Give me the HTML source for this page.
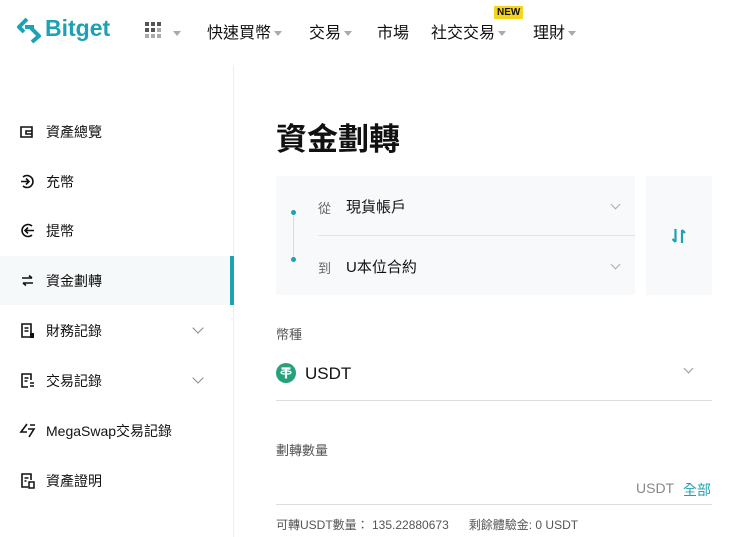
<!DOCTYPE html><html><head><meta charset="utf-8"><style>
*{margin:0;padding:0;box-sizing:border-box}
body{width:740px;height:537px;overflow:hidden;background:#fff;font-family:"Liberation Sans","Noto Sans CJK TC",sans-serif;color:#111;position:relative}
.a{position:absolute;white-space:nowrap}
.nav{font-size:16px;top:19px}
.tri{display:inline-block;width:0;height:0;border-left:4px solid transparent;border-right:4px solid transparent;border-top:5px solid #aaa;vertical-align:middle;margin-left:3px}
.si{font-size:14px;left:46px}
.ic{left:19px;width:17px;height:17px}
.chev{width:8px;height:8px;border-right:1.3px solid #888;border-bottom:1.3px solid #888;transform:rotate(45deg)}
</style></head><body>
<svg class="a" style="left:16px;top:16px" width="26" height="28" viewBox="0 0 26 28"><path d="M11 3 L3 11 L8 16 M9 11 H18 M15 12 L23 20 L16 26" fill="none" stroke="#1da2b4" stroke-width="4" stroke-linejoin="round"/></svg>
<div class="a" style="left:45px;top:15px;font-size:23px;font-weight:bold;color:#1da2b4">Bitget</div>
<svg class="a" style="left:145px;top:22px" width="18" height="16"><g fill="#555"><rect x="0" y="0" width="4" height="4"/><rect x="6" y="0" width="4" height="4"/><rect x="12" y="0" width="4" height="4"/><rect x="0" y="6" width="4" height="4"/><rect x="6" y="6" width="4" height="4"/><rect x="12" y="6" width="4" height="4" fill="#aaa"/><rect x="0" y="12" width="4" height="4" fill="#aaa"/><rect x="6" y="12" width="4" height="4" fill="#aaa"/><rect x="12" y="12" width="4" height="4" fill="#aaa"/></g></svg>
<div class="a" style="left:170px;top:25px"><span class="tri"></span></div>
<div class="a nav" style="left:207px">快速買幣<span class="tri"></span></div>
<div class="a nav" style="left:309px">交易<span class="tri"></span></div>
<div class="a nav" style="left:377px">市場</div>
<div class="a nav" style="left:431px">社交交易<span class="tri"></span></div>
<div class="a" style="left:494px;top:6px;background:#f7d51d;font-size:10px;font-weight:bold;padding:0 3px;line-height:13px">NEW</div>
<div class="a nav" style="left:533px">理財<span class="tri"></span></div>

<div class="a" style="left:233px;top:65px;width:1px;height:472px;background:#eee"></div>
<div class="a" style="left:0;top:256px;width:233px;height:49px;background:#f6f9f9"></div>
<div class="a" style="left:230px;top:256px;width:4px;height:49px;background:#1da2b4"></div>

<svg class="a ic" style="top:123px" viewBox="0 0 17 17"><path d="M2 4h11v10H2z M7 8h6v3H7z" fill="none" stroke="#111" stroke-width="1.6"/></svg>
<div class="a si" style="top:122px">資產總覽</div>
<svg class="a ic" style="top:173px" viewBox="0 0 17 17"><path d="M4 4a6 6 0 1 1 0 9 M2 8.5h8 M7 5.5l3 3-3 3" fill="none" stroke="#111" stroke-width="1.6"/></svg>
<div class="a si" style="top:172px">充幣</div>
<svg class="a ic" style="top:222px" viewBox="0 0 17 17"><path d="M13 4a6 6 0 1 0 0 9 M6 8.5h9 M9 5.5l-3 3 3 3" fill="none" stroke="#111" stroke-width="1.6"/></svg>
<div class="a si" style="top:221px">提幣</div>
<svg class="a ic" style="top:272px" viewBox="0 0 17 17"><path d="M3 6h10 M10 3.5l3 2.5 M14 11H4 M7 13.5l-3-2.5" fill="none" stroke="#111" stroke-width="1.6"/></svg>
<div class="a si" style="top:271px">資金劃轉</div>
<svg class="a ic" style="top:322px" viewBox="0 0 17 17"><path d="M3 2h9v13H3z M5.5 6h4 M5.5 9h4" fill="none" stroke="#111" stroke-width="1.6"/><rect x="11" y="11" width="4" height="5" fill="#111"/></svg>
<div class="a si" style="top:321px">財務記錄</div>
<div class="a chev" style="left:194px;top:324px"></div>
<svg class="a ic" style="top:372px" viewBox="0 0 17 17"><path d="M12 8V2H3v13h6 M5.5 6h4 M5.5 9h3 M11 11h4 M11 14h4" fill="none" stroke="#111" stroke-width="1.6"/></svg>
<div class="a si" style="top:371px">交易記錄</div>
<div class="a chev" style="left:194px;top:374px"></div>
<svg class="a ic" style="top:422px" viewBox="0 0 17 17"><path d="M8 2L2 10h6 M9 7h6l-5 8 M11 3h5" fill="none" stroke="#111" stroke-width="1.6"/></svg>
<div class="a si" style="top:421px">MegaSwap交易記錄</div>
<svg class="a ic" style="top:472px" viewBox="0 0 17 17"><path d="M9 15H3V2h9v6 M5.5 6h4 M5.5 9h2" fill="none" stroke="#111" stroke-width="1.6"/><rect x="10" y="10" width="5" height="6" fill="none" stroke="#111" stroke-width="1.5"/></svg>
<div class="a si" style="top:471px">資產證明</div>

<div class="a" style="left:276px;top:114px;font-size:31px;font-weight:bold">資金劃轉</div>
<div class="a" style="left:276px;top:176px;width:359px;height:119px;background:#f7f9fb"></div>
<div class="a" style="left:646px;top:176px;width:66px;height:119px;background:#f7f9fb"></div>
<div class="a" style="left:293px;top:213px;width:1px;height:45px;background:#ddd"></div>
<div class="a" style="left:291px;top:210px;width:5px;height:5px;border-radius:50%;background:#1da2b4"></div>
<div class="a" style="left:291px;top:257px;width:5px;height:5px;border-radius:50%;background:#1da2b4"></div>
<div class="a" style="left:318px;top:198px;font-size:13px;color:#666">從</div>
<div class="a" style="left:346px;top:196px;font-size:15px">現貨帳戶</div>
<div class="a chev" style="left:612px;top:201px;border-color:#aaa;width:7px;height:7px"></div>
<div class="a" style="left:318px;top:235px;width:317px;height:1px;background:#e3e6e9"></div>
<div class="a" style="left:318px;top:258px;font-size:13px;color:#666">到</div>
<div class="a" style="left:346px;top:256px;font-size:15px">U本位合約</div>
<div class="a chev" style="left:612px;top:261px;border-color:#aaa;width:7px;height:7px"></div>
<svg class="a" style="left:671px;top:228px" width="16" height="16" viewBox="0 0 16 16"><path d="M4.5 1v13 M1.5 11l3 3 M11 15V2 M14 5l-3-3" fill="none" stroke="#1da2b4" stroke-width="2.2"/></svg>

<div class="a" style="left:276px;top:324px;font-size:13px;color:#555">幣種</div>
<svg class="a" style="left:276px;top:363px" width="20" height="20" viewBox="0 0 20 20"><circle cx="10" cy="10" r="10" fill="#26a17b"/><path d="M5.5 5.5h9 M10 5.5v10" stroke="#fff" stroke-width="2.2"/><ellipse cx="10" cy="9.5" rx="5" ry="1.6" fill="none" stroke="#fff" stroke-width="1.3"/></svg>
<div class="a" style="left:305px;top:364px;font-size:17px">USDT</div>
<div class="a chev" style="left:685px;top:365px;border-color:#999;width:7px;height:7px"></div>
<div class="a" style="left:276px;top:400px;width:436px;height:1px;background:#ddd"></div>
<div class="a" style="left:276px;top:440px;font-size:13px;color:#555">劃轉數量</div>
<div class="a" style="left:636px;top:480px;font-size:14px;color:#888">USDT</div>
<div class="a" style="left:683px;top:480px;font-size:14px;color:#1da2b4">全部</div>
<div class="a" style="left:276px;top:504px;width:436px;height:1px;background:#ddd"></div>
<div class="a" style="left:276px;top:516px;font-size:12px;color:#555">可轉USDT數量： 135.22880673 &nbsp;&nbsp;&nbsp;&nbsp;&nbsp;剩餘體驗金: 0 USDT</div>
</body></html>
